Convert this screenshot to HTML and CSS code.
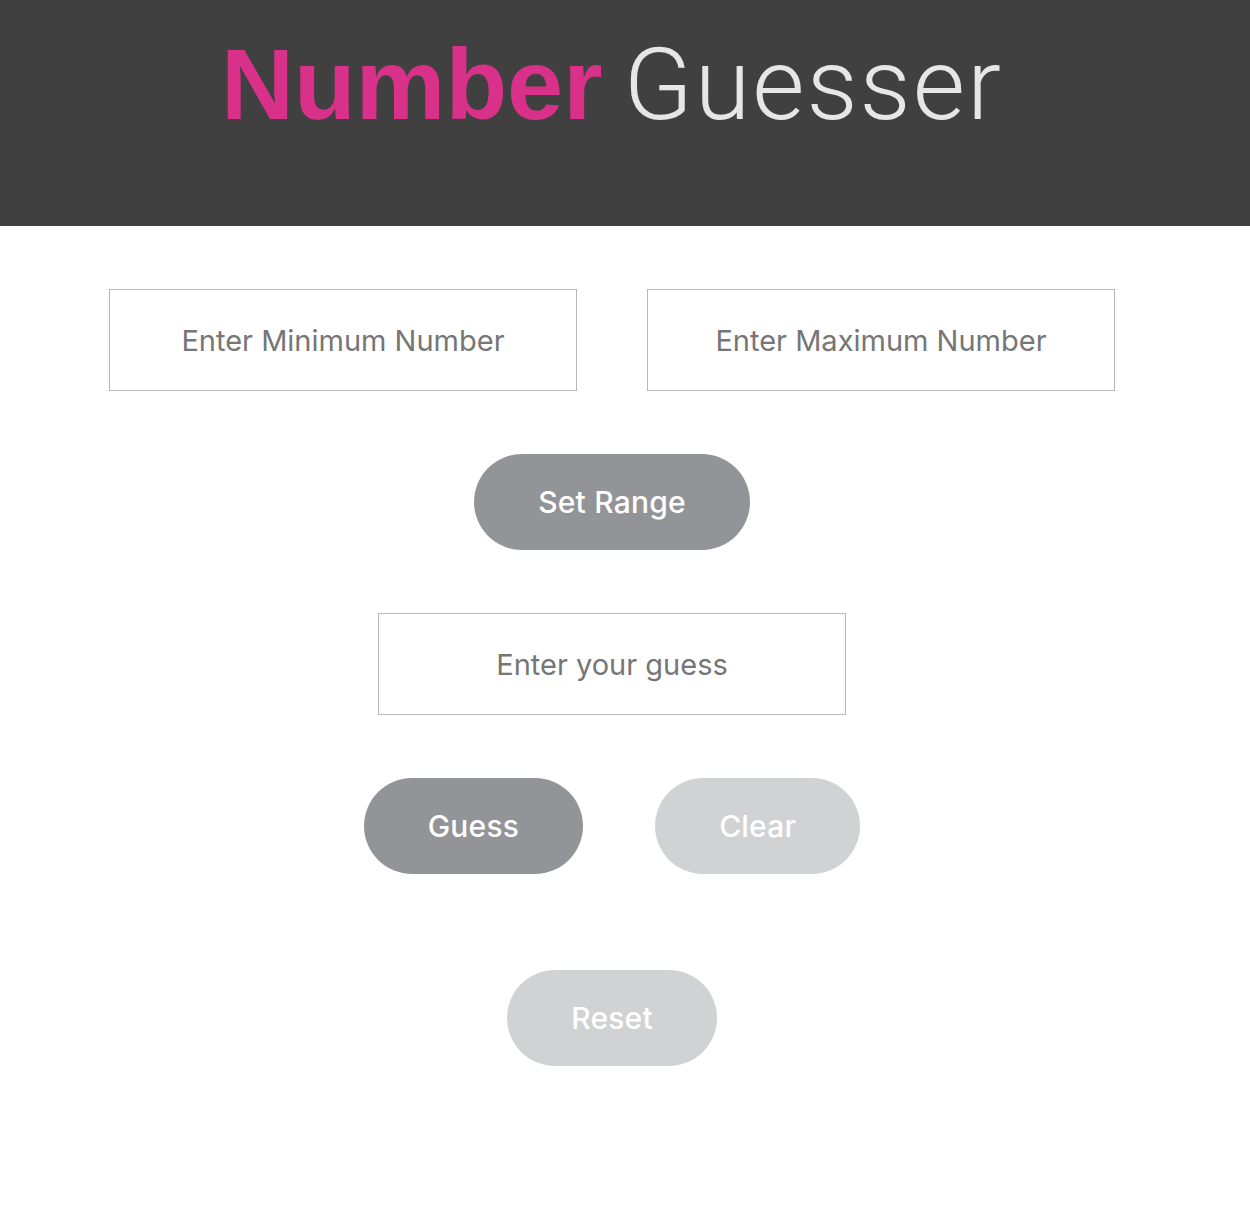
FILE: index.html
```html
<!DOCTYPE html>
<html lang="en">
<head>
<meta charset="utf-8">
<title>Number Guesser</title>
<link rel="stylesheet" href="styles.css">
</head>
<body>
<header class="header">
  <h1 class="title"><span class="title-bold">Number</span> <span class="title-light">Guesser</span></h1>
</header>
<main class="main">
  <div class="range-row">
    <input class="field" type="text" placeholder="Enter Minimum Number">
    <input class="field" type="text" placeholder="Enter Maximum Number">
  </div>
  <button class="btn btn-dark" type="button">Set Range</button>
  <input class="field" type="text" placeholder="Enter your guess">
  <div class="btn-row">
    <button class="btn btn-dark" type="button">Guess</button>
    <button class="btn btn-light" type="button">Clear</button>
  </div>
  <button class="btn btn-light btn-reset" type="button">Reset</button>
</main>
</body>
</html>
```
FILE: styles.css
```css
html, body {
  margin: 0;
  padding: 0;
  background: #ffffff;
}
body {
  font-family: Inter, "Liberation Sans", sans-serif;
}
.header {
  box-sizing: border-box;
  background: #404040;
  height: 226px;
  padding-right: 26px;
  display: flex;
  justify-content: center;
  align-items: flex-start;
}
.title {
  margin: 34px 0 0;
  font-family: "Liberation Sans", Arial, sans-serif;
  font-size: 101px;
  line-height: 1;
  font-weight: 400;
  white-space: nowrap;
}
.title-bold {
  color: #d9308a;
  font-weight: 700;
}
.title-light {
  color: #e6e6e6;
  font-family: Roboto, "Liberation Sans", sans-serif;
  font-weight: 300;
  letter-spacing: 2px;
  margin-left: -7px;
}
.main {
  box-sizing: border-box;
  padding-right: 26px;
  display: flex;
  flex-direction: column;
  align-items: center;
  padding-top: 63px;
  gap: 63px;
}
.range-row {
  display: flex;
  gap: 70px;
}
.btn-row {
  display: flex;
  gap: 72px;
}
.field {
  box-sizing: border-box;
  width: 468px;
  height: 102px;
  border: 1px solid #b8b8b8;
  border-radius: 0;
  background: #fff;
  font-family: Inter, "Liberation Sans", sans-serif;
  font-size: 29px;
  text-align: center;
  color: #333;
  outline: none;
  padding: 0;
  margin: 0;
}
.field::placeholder {
  color: #767676;
  opacity: 1;
}
.btn {
  height: 96px;
  padding: 0 64px;
  border: none;
  border-radius: 48px;
  font-family: Inter, "Liberation Sans", sans-serif;
  font-size: 30px;
  font-weight: 500;
  letter-spacing: 0.2px;
  color: #ffffff;
  margin: 0;
}
.btn-dark {
  background: #939497;
}
.btn-light {
  background: #d1d2d4;
}
.btn-reset {
  margin-top: 33px;
}
```
